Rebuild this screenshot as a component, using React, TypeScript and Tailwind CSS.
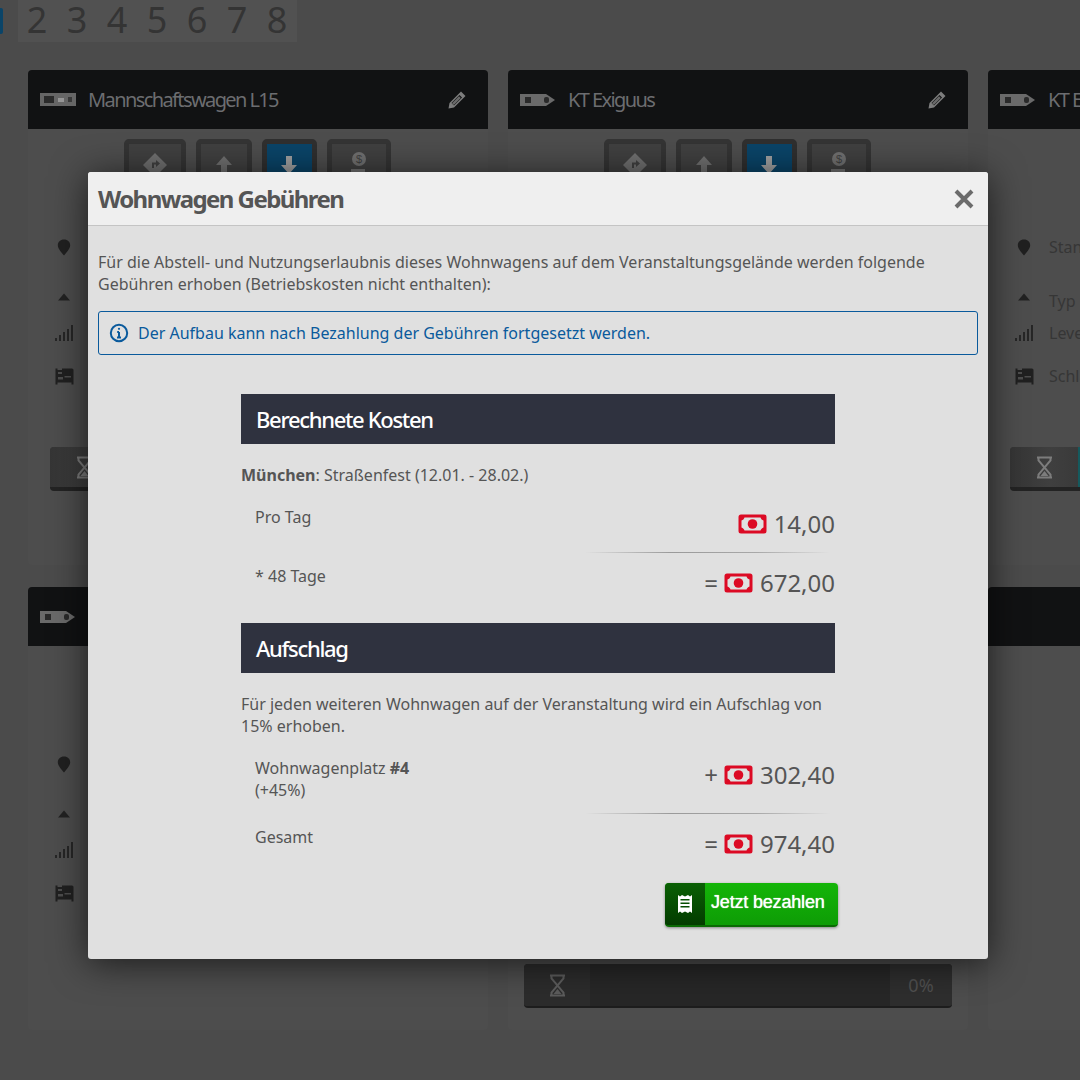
import React from "react";

const noto = "font-['Noto_Sans',sans-serif]";

function Money() {
  return (
    <svg width="29" height="20" viewBox="0 0 29 20" className="inline-block shrink-0">
      <path
        fillRule="evenodd"
        d="M3 0.5H26A2.5 2.5 0 0 1 28.5 3V17A2.5 2.5 0 0 1 26 19.5H3A2.5 2.5 0 0 1 0.5 17V3A2.5 2.5 0 0 1 3 0.5ZM6.5 3.5C6 5 5 6 3.5 6.5V13.5C5 14 6 15 6.5 16.5H22.5C23 15 24 14 25.5 13.5V6.5C24 6 23 5 22.5 3.5Z"
        fill="#dc0a24"
      />
      <circle cx="14.5" cy="10" r="4.8" fill="#dc0a24" />
    </svg>
  );
}

function Pin() {
  return (
    <svg width="14" height="17" viewBox="0 0 14 17">
      <path d="M7 0.5C3.2 0.5 0.8 3 0.8 6.2C0.8 9.8 4.8 13.6 7 16.5C9.2 13.6 13.2 9.8 13.2 6.2C13.2 3 10.8 0.5 7 0.5Z" fill="#202020" />
    </svg>
  );
}

function Tri() {
  return (
    <svg width="14" height="8" viewBox="0 0 14 8">
      <path d="M7 0.5L13 7.5H1Z" fill="#222222" />
    </svg>
  );
}

function Bars() {
  return (
    <svg width="20" height="18" viewBox="0 0 20 18">
      <rect x="1" y="14" width="2" height="3" fill="#262626" />
      <rect x="5" y="11" width="2" height="6" fill="#262626" />
      <rect x="9" y="8" width="2" height="9" fill="#262626" />
      <rect x="13" y="5" width="2" height="12" fill="#262626" />
      <rect x="17" y="1" width="2" height="16" fill="#262626" />
    </svg>
  );
}

function Bed() {
  return (
    <svg width="19" height="17" viewBox="0 0 19 17">
      <path
        fillRule="evenodd"
        d="M0.5 0.5H2.5V2H7V0.5H17A1.5 1.5 0 0 1 18.5 2V16.5H16.5V14.5H2.5V16.5H0.5ZM3 4V6H7V4ZM3 9V11.5H8V9ZM9.5 8V9.5H16V8Z"
        fill="#202020"
      />
    </svg>
  );
}

function Hourglass({ color }: { color: string }) {
  return (
    <svg width="17" height="23" viewBox="0 0 17 23" fill="none" stroke={color} strokeWidth="2">
      <path d="M1 1.5H16M1 21.5H16M2.5 2V4.5L14.5 18.5V21M14.5 2V4.5L2.5 18.5V21" />
      <path d="M4.5 20L8.5 15L12.5 20Z" fill={color} stroke="none" />
    </svg>
  );
}

function Truck({ wide = false }: { wide?: boolean }) {
  if (wide) {
    return (
      <div className="flex h-[13px] w-[36px] items-center justify-between bg-[#666666] px-[4px]">
        <span className="h-[7px] w-[10px] bg-[#2b2b2b]" />
        <span className="h-[4px] w-[6px] bg-[#969696]" />
        <span className="h-[5px] w-[4px] bg-[#3a3a3a]" />
      </div>
    );
  }
  return (
    <svg width="36" height="14" viewBox="0 0 36 14">
      <path d="M0 1H26L35 7L26 13H0Z" fill="#6a6a6a" />
      <rect x="5" y="4" width="6" height="6" fill="#2a2a2a" />
      <rect x="24" y="4" width="5" height="6" rx="2" fill="#2a2a2a" />
    </svg>
  );
}

function ActionBtn({ w, active, children }: { w: string; active?: boolean; children: React.ReactNode }) {
  return (
    <div
      className={`flex h-[52px] items-center justify-center rounded-[5px] border-[5px] ${w} ${
        active ? "border-[#2f2f2f] bg-[#0a4468]" : "border-[#343434] bg-[#404040]"
      }`}
    >
      {children}
    </div>
  );
}

type CardProps = {
  title?: string;
  wide?: boolean;
  label?: boolean;
  progress?: "light" | "dark";
  teal?: boolean;
  empty?: boolean;
  h: string;
};

function InfoRow({ h, icon, text, textClass = "" }: { h: string; icon: React.ReactNode; text: string; textClass?: string }) {
  return (
    <div className={`flex items-center ${h}`}>
      <div className="flex w-[40px] justify-center">{icon}</div>
      <span className={`${noto} ml-[5px] text-[16px] text-[#363636] ${textClass}`}>{text}</span>
    </div>
  );
}

function Card({ title = "", wide, label, progress, teal, empty, h }: CardProps) {
  return (
    <div className={`flex w-[460px] shrink-0 flex-col rounded-b-[4px] bg-[#4d4d4d] ${h}`}>
      <div className="flex h-[59px] shrink-0 items-center rounded-t-[4px] bg-[#111213] pl-[12px] pr-[21px]">
        {!empty && (
          <>
            <Truck wide={wide} />
            <span className={`${noto} ml-[12px] text-[20px] tracking-[-0.08em] text-[#6c6d70]`}>{title}</span>
            <svg className="ml-auto" width="20" height="20" viewBox="0 0 20 20">
              <path d="M14 1.5L18.5 6L7 17.5L1.5 18.5L2.5 13ZM12.5 5L4.5 13L7 15.5L15 7.5Z" fillRule="evenodd" fill="#7d7d7d" />
              <path d="M12 6.2L13.8 8L6.8 15L5 13.2Z" fill="#6a6a6a" />
            </svg>
          </>
        )}
      </div>
      {!empty && (
        <>
          <div className="flex justify-center gap-[10px] pr-[2px] pt-[10px]">
            <ActionBtn w="w-[62px]">
              <svg width="26" height="26" viewBox="0 0 26 26">
                <path fillRule="evenodd" d="M13 1L25 13L13 25L1 13ZM14 8V10.5H10V16H12V12.5H14V15L18 11.5Z" fill="#707070" />
              </svg>
            </ActionBtn>
            <ActionBtn w="w-[56px]">
              <svg width="18" height="20" viewBox="0 0 18 20">
                <path d="M9 1L17 10H12V19H6V10H1Z" fill="#707070" />
              </svg>
            </ActionBtn>
            <ActionBtn w="w-[55px]" active>
              <svg width="18" height="20" viewBox="0 0 18 20">
                <path d="M6 1H12V10H17L9 19L1 10H6Z" fill="#a0a0a0" />
              </svg>
            </ActionBtn>
            <ActionBtn w="w-[64px]">
              <svg width="24" height="28" viewBox="0 0 24 28">
                <circle cx="12" cy="8" r="7" fill="#707070" />
                <text x="12" y="12" textAnchor="middle" fontSize="11" fontFamily="Liberation Sans" fill="#404040">$</text>
                <rect x="4" y="18" width="14" height="8" fill="#707070" />
              </svg>
            </ActionBtn>
          </div>
          <div className="mx-[16px] mt-[41px] flex flex-col gap-[16px]">
            <InfoRow h="h-[30px]" icon={<Pin />} text={label ? "Standort" : ""} />
            <div className="flex flex-col pb-[10px]">
              <InfoRow h="h-[37px]" icon={<Tri />} text={label ? "Typ" : ""} textClass="mt-[8px]" />
              <InfoRow h="h-[36px]" icon={<Bars />} text={label ? "Level" : ""} />
              <InfoRow h="h-[50px]" icon={<Bed />} text={label ? "Schlafplätze" : ""} />
            </div>
          </div>
          {progress === "light" && (
            <div className="ml-[22px] mt-[36px] flex h-[44px] w-[428px] overflow-hidden rounded-[4px] border-b-[4px] border-[#232323] bg-[#333333]">
              <div className="flex w-[68px] items-center justify-center bg-[linear-gradient(90deg,#353535,#3f3f3f_60%,#3a3a3a)]">
                <Hourglass color="#7c7c7c" />
              </div>
              {teal && <div className="flex-1 bg-[#155a5e]" />}
            </div>
          )}
          {progress === "dark" && (
            <div className="ml-[16px] mt-[36px] flex h-[44px] w-[428px] overflow-hidden rounded-[4px] border-b-[2px] border-[#1d1d1d] bg-[#272727]">
              <div className="flex w-[66px] items-center justify-center bg-[#2c2c2c]">
                <Hourglass color="#5c5c5c" />
              </div>
              <div className="flex-1" />
              <div className="flex w-[62px] items-center justify-center bg-[#2e2e2e]">
                <span className={`${noto} text-[18px] text-[#505050]`}>0%</span>
              </div>
            </div>
          )}
        </>
      )}
    </div>
  );
}

function Cost({ label, sub, prefix, value, mt, h }: { label: React.ReactNode; sub?: string; prefix?: string; value: string; mt: string; h: string }) {
  return (
    <div className={`flex items-start justify-between pl-[14px] ${mt} ${h}`}>
      <div className="text-[16px] leading-[22px]">
        <div>{label}</div>
        {sub && <div>{sub}</div>}
      </div>
      <div className="flex items-center gap-[7px] pt-[1px] text-[24px] leading-[33px]">
        {prefix && <span className="mr-[-1px]">{prefix}</span>}
        <Money />
        <span>{value}</span>
      </div>
    </div>
  );
}

function Divider() {
  return <div className="ml-auto mr-[5px] h-[1px] w-[245px] bg-[linear-gradient(90deg,transparent,#9a9a9a_35%,#a8a8a8_70%,transparent)]" />;
}

function SectionHead({ children }: { children: React.ReactNode }) {
  return (
    <div className="flex h-[50px] items-center bg-[#2f323f] pl-[15px] text-[22px] font-medium tracking-[-0.06em] text-white">
      {children}
    </div>
  );
}

export default function App() {
  return (
    <div className="relative h-[1080px] w-[1080px] overflow-hidden bg-[#4b4b4b]">
      <div className="flex h-[70px] items-start">
        <div className="mt-[8px] h-[26px] w-[3px] rounded-r-[2px] bg-[#0a4468]" />
        <div className={`${noto} ml-[15px] flex h-[42px] w-[279px] items-center gap-[18px] bg-[#515151] pb-[2px] pl-[8px] text-[36px] leading-[40px] text-[#343434]`}>
          {["2", "3", "4", "5", "6", "7", "8"].map((n) => (
            <span key={n} className="w-[22px] text-center">{n}</span>
          ))}
        </div>
      </div>
      <div className="ml-[28px] flex gap-[20px]">
        <Card h="h-[495px]" title="Mannschaftswagen L15" wide progress="light" />
        <Card h="h-[495px]" title="KT Exiguus" />
        <Card h="h-[495px]" title="KT Exiguus" label progress="light" teal />
      </div>
      <div className="ml-[28px] mt-[22px] flex gap-[20px]">
        <Card h="h-[443px]" title="KT Exiguus" />
        <Card h="h-[443px]" title="KT Exiguus" progress="dark" />
        <Card h="h-[443px]" empty />
      </div>

      <div className={`${noto} absolute left-[88px] top-[172px] h-[787px] w-[900px] rounded-[3px] bg-[#e0e0e0] text-[#555555] shadow-[0_4px_36px_rgba(0,0,0,0.65)]`}>
        <div className="flex h-[54px] items-center justify-between rounded-t-[3px] border-b border-[#c4c4c4] bg-[#efefef] pl-[10px] pr-[13px]">
          <h2 className="text-[24px] font-bold tracking-[-0.065em] text-[#555555]">Wohnwagen Gebühren</h2>
          <svg width="22" height="22" viewBox="0 0 22 22" stroke="#6b6b6b" strokeWidth="4">
            <path d="M3 3L19 19M19 3L3 19" />
          </svg>
        </div>
        <div className="px-[10px]">
          <p className="pt-[25px] text-[16px] leading-[22px]">
            Für die Abstell- und Nutzungserlaubnis dieses Wohnwagens auf dem Veranstaltungsgelände werden folgende Gebühren erhoben (Betriebskosten nicht enthalten):
          </p>
          <div className="mt-[16px] flex h-[44px] items-center gap-[9px] rounded-[3px] border border-[#0a5a9c] pl-[10px] text-[16px] text-[#0a5a9c]">
            <svg width="20" height="20" viewBox="0 0 20 20" fill="none" stroke="#0a5a9c" strokeWidth="2">
              <circle cx="10" cy="10" r="8.2" />
              <path d="M10 9V14.5M8 14.5H12M8.2 9H10" />
              <circle cx="10" cy="5.8" r="1.1" fill="#0a5a9c" stroke="none" />
            </svg>
            <span>Der Aufbau kann nach Bezahlung der Gebühren fortgesetzt werden.</span>
          </div>
          <div className="mx-auto mt-[39px] w-[594px]">
            <SectionHead>Berechnete Kosten</SectionHead>
            <p className="mt-[20px] text-[16px] leading-[22px]">
              <b>München</b>: Straßenfest (12.01. - 28.02.)
            </p>
            <Cost label="Pro Tag" value="14,00" mt="mt-[20px]" h="h-[46px]" />
            <Divider />
            <Cost label="* 48 Tage" prefix="=" value="672,00" mt="mt-[12px]" h="h-[58px]" />
            <SectionHead>Aufschlag</SectionHead>
            <p className="mt-[20px] text-[16px] leading-[22px]">
              Für jeden weiteren Wohnwagen auf der Veranstaltung wird ein Aufschlag von 15% erhoben.
            </p>
            <Cost label={<>Wohnwagenplatz <b>#4</b></>} sub="(+45%)" prefix="+" value="302,40" mt="mt-[20px]" h="h-[56px]" />
            <Divider />
            <Cost label="Gesamt" prefix="=" value="974,40" mt="mt-[12px]" h="h-[57px]" />
            <div className="flex justify-end">
              <div className="mr-[-3px] flex h-[44px] w-[173px] overflow-hidden rounded-[4px] border-b-[2px] border-[#0a6a04] bg-[linear-gradient(180deg,#14b508,#0e9c06)] shadow-[0_1px_3px_rgba(0,0,0,0.4)]">
                <div className="flex w-[40px] items-center justify-center bg-[linear-gradient(180deg,#0a6004,#033c00)]">
                  <svg width="16" height="20" viewBox="0 0 16 20">
                    <path
                      fillRule="evenodd"
                      d="M1 1L3 2.5L5 1L8 2.5L11 1L13 2.5L15 1V19L13 17.5L11 19L8 17.5L5 19L3 17.5L1 19ZM3.5 5V6.5H12.5V5ZM3.5 8.5V10H12.5V8.5ZM3.5 12V13.5H12.5V12Z"
                      fill="#ffffff"
                    />
                  </svg>
                </div>
                <span className="flex-1 pl-[6px] font-['Liberation_Sans',sans-serif] text-[18px] font-normal leading-[38px] tracking-[-0.01em] text-white [text-shadow:0_0_1px_#fff]">
                  Jetzt bezahlen
                </span>
              </div>
            </div>
          </div>
        </div>
      </div>
    </div>
  );
}
